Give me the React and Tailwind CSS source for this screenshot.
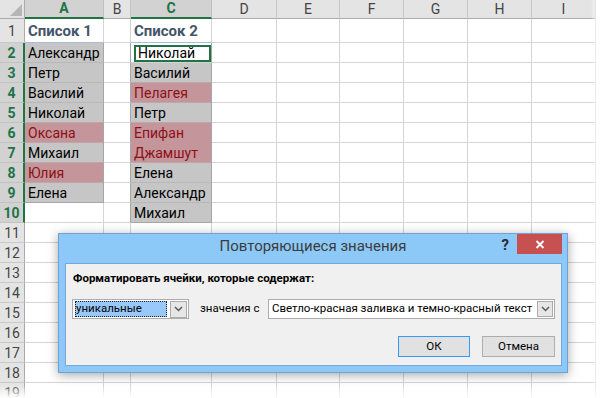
import React from 'react';

const COLS = ['A', 'B', 'C', 'D', 'E', 'F', 'G', 'H', 'I'];
const ROWS = Array.from({ length: 19 }, (_, i) => i + 1);

const DATA = {
  A: { 1: 'Список 1', 2: 'Александр', 3: 'Петр', 4: 'Василий', 5: 'Николай', 6: 'Оксана', 7: 'Михаил', 8: 'Юлия', 9: 'Елена' },
  C: { 1: 'Список 2', 2: 'Николай', 3: 'Василий', 4: 'Пелагея', 5: 'Петр', 6: 'Епифан', 7: 'Джамшут', 8: 'Елена', 9: 'Александр', 10: 'Михаил' },
};
const PINK = { A6: true, A8: true, C4: true, C6: true, C7: true };
const LAST = { A: 9, C: 10 };

function cellClass(col, r) {
  const h = r === 1 ? 'h-[24px]' : 'h-[20px]';
  const base = `${h} flex items-center pl-[3px] pt-[2px] overflow-hidden whitespace-nowrap text-[14px] border-r border-b`;
  const filled = LAST[col] && r >= 2 && r <= LAST[col];

  if (r === 1 && DATA[col]) {
    return `${base} text-[15px] font-bold text-[#44546a] border-r-[#d4d4d4] border-b-[#a9bdd9]`;
  }
  if (col === 'C' && r === 2) {
    return `${h} pl-[3px] pt-[2px] border-r border-b border-r-[#a6a6a6] border-b-[#d4d4d4] bg-white`;
  }
  if (filled) {
    const pink = PINK[col + r];
    const next = PINK[col + (r + 1)];
    const fill = pink ? 'bg-[#c4959a] text-[#8e1016]' : 'bg-[#c6c6c6] text-black';
    let bottom = 'border-b-[#b8b8b8]';
    if (r === LAST[col]) bottom = 'border-b-[#a6a6a6]';
    else if (pink && next) bottom = 'border-b-[#c4959a]';
    else if (pink || next) bottom = 'border-b-[#c0a6a9]';
    return `${base} ${fill} border-r-[#a6a6a6] ${bottom}`;
  }
  if (col === 'B' && r >= 2 && r <= 10) {
    return `${base} border-r-[#a6a6a6] border-b-[#d4d4d4]`;
  }
  return `${base} border-r-[#d4d4d4] border-b-[#d4d4d4]`;
}

function rowHeadClass(r) {
  const h = r === 1 ? 'h-[24px]' : 'h-[20px]';
  if (r >= 2 && r <= 10) {
    return `${h} flex items-center justify-center pt-[1px] text-[14px] font-bold text-[#217346] bg-[#d2d2d2] border-b border-b-[#c2c2c2] border-r-2 border-r-[#217346]`;
  }
  return `${h} flex items-center justify-center pt-[1px] text-[14px] text-[#444] bg-[#e4e4e4] border-b border-b-[#c9c9c9] border-r border-r-[#ababab]`;
}

function colHeadClass(col) {
  if (col === 'A' || col === 'C') {
    return "h-[19px] flex items-center justify-center text-[14px] font-bold text-[#217346] bg-[#d2d2d2] border-r border-r-[#c0c0c0] border-b-2 border-b-[#217346]";
  }
  return "h-[19px] flex items-center justify-center text-[14px] text-[#444] bg-[#e4e4e4] border-r border-r-[#c6c6c6] border-b border-b-[#ababab]";
}

function Chevron() {
  return (
    <svg width="9" height="6" viewBox="0 0 9 6">
      <path d="M1 1l3.5 3.5L8 1" fill="none" stroke="#5a5a5a" strokeWidth="1.5" />
    </svg>
  );
}

function Sheet() {
  return (
    <div className="grid grid-cols-[25px_79px_27px_81px_65px_63px_64px_64px_64px_64px] font-['Roboto',sans-serif]">
      <div className="h-[19px] flex items-end justify-end p-[2px] bg-[#e4e4e4] border-r border-r-[#ababab] border-b border-b-[#ababab]">
        <svg width="12" height="12" viewBox="0 0 12 12">
          <polygon points="12,0 12,12 0,12" fill="#b6b6b6" />
        </svg>
      </div>
      {COLS.map((c) => (
        <div key={c} className={colHeadClass(c)}>{c}</div>
      ))}
      {ROWS.map((r) => (
        <React.Fragment key={r}>
          <div className={rowHeadClass(r)}>{r}</div>
          {COLS.map((c) => (
            <div key={c + r} className={cellClass(c, r)}>
              {c === 'C' && r === 2 ? (
                <div className="h-full flex items-center pl-[2px] border-2 border-[#217346] text-[14px]">
                  {DATA.C[2]}
                </div>
              ) : (
                DATA[c] && DATA[c][r]
              )}
            </div>
          ))}
        </React.Fragment>
      ))}
    </div>
  );
}

function Dialog() {
  return (
    <div className="absolute left-[58px] top-[233px] w-[510px] h-[140px] flex flex-col bg-[#8cc9f8] border border-[#6fa3d6] shadow-[0_2px_10px_rgba(0,0,0,0.35)] font-['Roboto',sans-serif]">
      <div className="relative h-[29px] flex items-center justify-center">
        <span className="text-[15px] text-[#3c3c3c] pb-[4px]">Повторяющиеся значения</span>
        <div className="absolute right-[5px] top-0 flex items-start gap-[8px]">
          <span className="text-[15px] font-bold text-[#2a2a2a] leading-[20px] pt-[1px]">?</span>
          <div className="w-[45px] h-[20px] bg-[#c75050] flex items-center justify-center">
            <svg width="10" height="9" viewBox="0 0 10 9">
              <path d="M1.5 1l7 7M8.5 1l-7 7" stroke="#fff" strokeWidth="1.8" />
            </svg>
          </div>
        </div>
      </div>
      <div className="flex-1 mb-[6px] ml-[6px] mr-[5px] bg-[#f0f0f0] border border-[#78a8d8] px-[6px] pt-[6px] text-[11.5px] text-black whitespace-nowrap">
        <div className="pl-[1px] font-bold leading-[16px]">Форматировать ячейки, которые содержат:</div>
        <div className="mt-[13px] flex items-center h-[20px]">
          <div className="w-[117px] h-[20px] flex items-center border border-[#acacac] bg-white pl-[2px] pr-[1px] py-[1px]">
            <div className="flex-1 h-[16px] flex items-center bg-[#99c9fa] border border-dotted border-[#222] leading-none">
              уникальные
            </div>
            <div className="ml-[3px] w-[17px] h-[17px] flex items-center justify-center border border-[#acacac] bg-[#e6e6e6]">
              <Chevron />
            </div>
          </div>
          <span className="w-[79px] pl-[11px]">значения с</span>
          <div className="flex-1 min-w-0 h-[20px] flex items-center border border-[#acacac] bg-white pl-[3px] pr-[1px]">
            <span className="flex-1">Светло-красная заливка и темно-красный текст</span>
            <div className="w-[16px] h-[16px] flex items-center justify-center border border-[#acacac] bg-[#e6e6e6]">
              <Chevron />
            </div>
          </div>
        </div>
        <div className="mt-[17px] flex justify-end gap-[12px]">
          <div className="w-[72px] h-[21px] flex items-center justify-center border border-[#3399ff] bg-[#e1e1e1]">ОК</div>
          <div className="w-[73px] h-[21px] flex items-center justify-center border border-[#adadad] bg-[#e1e1e1]">Отмена</div>
        </div>
      </div>
    </div>
  );
}

export default function App() {
  return (
    <div className="relative w-[600px] h-[398px] overflow-hidden bg-white">
      <Sheet />
      <Dialog />
      <div className="absolute right-0 top-0 h-full w-[9px] bg-gradient-to-r from-white/0 to-white pointer-events-none"></div>
      <div className="absolute left-0 bottom-0 w-full h-[13px] bg-gradient-to-b from-white/0 to-white pointer-events-none"></div>
    </div>
  );
}
